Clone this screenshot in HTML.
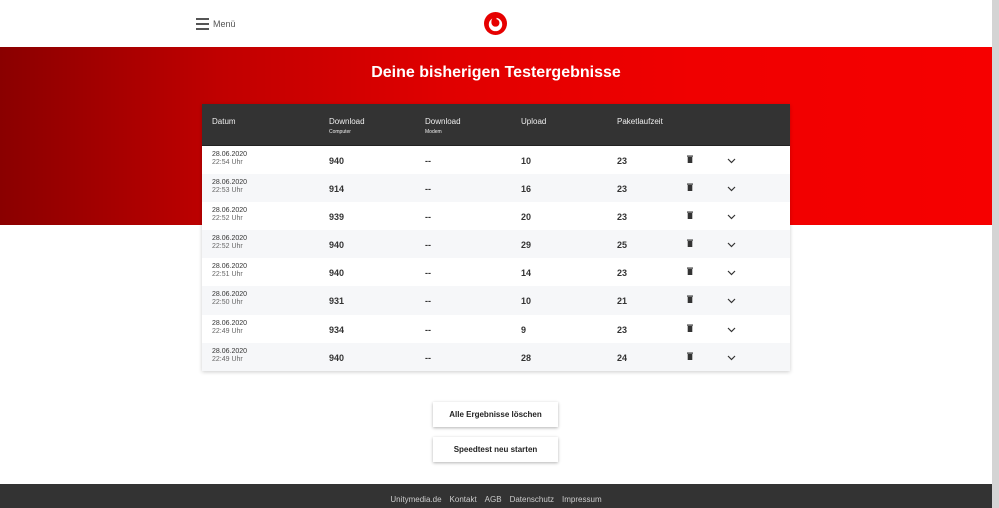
<!DOCTYPE html>
<html><head><meta charset="utf-8"><style>
*{margin:0;padding:0;box-sizing:border-box}
body{width:999px;height:508px;overflow:hidden;background:#fff;font-family:"Liberation Sans",sans-serif;position:relative}
.hdr{height:47px;background:#fff;position:relative}
.burger{position:absolute;left:196px;top:18px;width:13px}
.burger i{display:block;height:2px;background:#555;margin-bottom:3px}
.menu{position:absolute;left:213px;top:19px;font-size:9px;color:#555}
.logo{position:absolute;left:484px;top:12px}
.band{position:absolute;top:47px;left:0;width:992px;height:178px;background:linear-gradient(90deg,#8a0000 0%,#c00000 22%,#e00000 45%,#f00000 70%,#f60000 100%)}
.title{position:absolute;top:64px;left:0;width:992px;text-align:center;color:#fff;font-weight:bold;font-size:16px}
.tbl{position:absolute;left:202px;top:104px;width:588px;background:#fff;box-shadow:0 1px 4px rgba(0,0,0,.2)}
.th{height:42px;background:#333;color:#eee;position:relative;font-size:8px;border-bottom:1px solid #222}
.th span{position:absolute;top:13px}
.th small{display:block;font-size:5px;margin-top:3px}
.row{height:28.1px;position:relative;font-size:9px;color:#333}
.row:nth-child(even){background:#f6f7f9}
.row span{position:absolute}
.d{left:10px;top:5px;font-size:7px;line-height:8px}
.d em{font-style:normal;color:#666}
.n{top:10px;font-weight:bold}
.t{left:485px;top:9px;line-height:0}
.c{left:525px;top:12px;line-height:0}
.sb{position:absolute;right:0;top:0;width:7px;height:508px;background:#d4d4d4}
.btn{position:absolute;left:433px;width:125px;height:25px;background:#fff;box-shadow:0 1px 3px rgba(0,0,0,.3);font-size:8px;font-weight:bold;color:#222;text-align:center;line-height:25px}
.foot{position:absolute;top:484px;left:0;width:992px;height:24px;background:#333;color:#ccc;font-size:8px;text-align:center;padding-top:11px}
.foot span{margin:0 4px}
</style></head><body>
<div class="hdr">
<div class="burger"><i></i><i></i><i></i></div>
<div class="menu">Menü</div>
<svg class="logo" width="23" height="23" viewBox="0 0 24 24"><circle cx="12" cy="12" r="12" fill="#e60000"/><circle cx="12" cy="13" r="7" fill="#fff"/><path d="M13.5 3.5c-3.5.6-5.8 3.4-5.8 7 0 2.8 1.9 4.8 4.4 4.8 2.3 0 4-1.7 4-4 0-2.1-1.4-3.300-3-3.7-.2-1.6.4-3 .4-4.1z" fill="#e60000"/></svg>
</div>
<div class="band"></div>
<div class="title">Deine bisherigen Testergebnisse</div>
<div class="tbl">
<div class="th"><span style="left:10px">Datum</span><span style="left:127px">Download<small>Computer</small></span><span style="left:223px">Download<small>Modem</small></span><span style="left:319px">Upload</span><span style="left:415px">Paketlaufzeit</span></div>
<div>
<div class="row"><span class="d">28.06.2020<br><em>22:54 Uhr</em></span><span class="n" style="left:127px">940</span><span class="n" style="left:223px">--</span><span class="n" style="left:319px">10</span><span class="n" style="left:415px">23</span><span class="t"><svg width="6" height="8"><rect x="0" y="0.5" width="6" height="1.2" fill="#333"/><rect x="0.7" y="2" width="4.6" height="6" fill="#333"/></svg></span><span class="c"><svg width="9" height="6"><path d="M1 1l3.5 3.5L8 1" stroke="#333" stroke-width="1.2" fill="none"/></svg></span></div>
<div class="row"><span class="d">28.06.2020<br><em>22:53 Uhr</em></span><span class="n" style="left:127px">914</span><span class="n" style="left:223px">--</span><span class="n" style="left:319px">16</span><span class="n" style="left:415px">23</span><span class="t"><svg width="6" height="8"><rect x="0" y="0.5" width="6" height="1.2" fill="#333"/><rect x="0.7" y="2" width="4.6" height="6" fill="#333"/></svg></span><span class="c"><svg width="9" height="6"><path d="M1 1l3.5 3.5L8 1" stroke="#333" stroke-width="1.2" fill="none"/></svg></span></div>
<div class="row"><span class="d">28.06.2020<br><em>22:52 Uhr</em></span><span class="n" style="left:127px">939</span><span class="n" style="left:223px">--</span><span class="n" style="left:319px">20</span><span class="n" style="left:415px">23</span><span class="t"><svg width="6" height="8"><rect x="0" y="0.5" width="6" height="1.2" fill="#333"/><rect x="0.7" y="2" width="4.6" height="6" fill="#333"/></svg></span><span class="c"><svg width="9" height="6"><path d="M1 1l3.5 3.5L8 1" stroke="#333" stroke-width="1.2" fill="none"/></svg></span></div>
<div class="row"><span class="d">28.06.2020<br><em>22:52 Uhr</em></span><span class="n" style="left:127px">940</span><span class="n" style="left:223px">--</span><span class="n" style="left:319px">29</span><span class="n" style="left:415px">25</span><span class="t"><svg width="6" height="8"><rect x="0" y="0.5" width="6" height="1.2" fill="#333"/><rect x="0.7" y="2" width="4.6" height="6" fill="#333"/></svg></span><span class="c"><svg width="9" height="6"><path d="M1 1l3.5 3.5L8 1" stroke="#333" stroke-width="1.2" fill="none"/></svg></span></div>
<div class="row"><span class="d">28.06.2020<br><em>22:51 Uhr</em></span><span class="n" style="left:127px">940</span><span class="n" style="left:223px">--</span><span class="n" style="left:319px">14</span><span class="n" style="left:415px">23</span><span class="t"><svg width="6" height="8"><rect x="0" y="0.5" width="6" height="1.2" fill="#333"/><rect x="0.7" y="2" width="4.6" height="6" fill="#333"/></svg></span><span class="c"><svg width="9" height="6"><path d="M1 1l3.5 3.5L8 1" stroke="#333" stroke-width="1.2" fill="none"/></svg></span></div>
<div class="row"><span class="d">28.06.2020<br><em>22:50 Uhr</em></span><span class="n" style="left:127px">931</span><span class="n" style="left:223px">--</span><span class="n" style="left:319px">10</span><span class="n" style="left:415px">21</span><span class="t"><svg width="6" height="8"><rect x="0" y="0.5" width="6" height="1.2" fill="#333"/><rect x="0.7" y="2" width="4.6" height="6" fill="#333"/></svg></span><span class="c"><svg width="9" height="6"><path d="M1 1l3.5 3.5L8 1" stroke="#333" stroke-width="1.2" fill="none"/></svg></span></div>
<div class="row"><span class="d">28.06.2020<br><em>22:49 Uhr</em></span><span class="n" style="left:127px">934</span><span class="n" style="left:223px">--</span><span class="n" style="left:319px">9</span><span class="n" style="left:415px">23</span><span class="t"><svg width="6" height="8"><rect x="0" y="0.5" width="6" height="1.2" fill="#333"/><rect x="0.7" y="2" width="4.6" height="6" fill="#333"/></svg></span><span class="c"><svg width="9" height="6"><path d="M1 1l3.5 3.5L8 1" stroke="#333" stroke-width="1.2" fill="none"/></svg></span></div>
<div class="row"><span class="d">28.06.2020<br><em>22:49 Uhr</em></span><span class="n" style="left:127px">940</span><span class="n" style="left:223px">--</span><span class="n" style="left:319px">28</span><span class="n" style="left:415px">24</span><span class="t"><svg width="6" height="8"><rect x="0" y="0.5" width="6" height="1.2" fill="#333"/><rect x="0.7" y="2" width="4.6" height="6" fill="#333"/></svg></span><span class="c"><svg width="9" height="6"><path d="M1 1l3.5 3.5L8 1" stroke="#333" stroke-width="1.2" fill="none"/></svg></span></div>
</div></div>
<div class="btn" style="top:402px">Alle Ergebnisse löschen</div>
<div class="btn" style="top:437px">Speedtest neu starten</div>
<div class="foot"><span>Unitymedia.de</span><span>Kontakt</span><span>AGB</span><span>Datenschutz</span><span>Impressum</span></div>
<div class="sb"></div>
</body></html>
